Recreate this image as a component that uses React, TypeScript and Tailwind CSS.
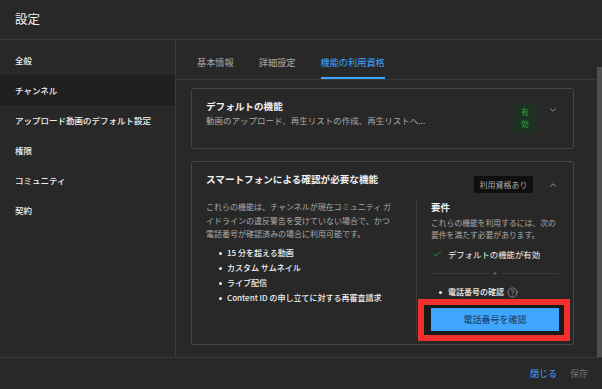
import { Check, ChevronDown, ChevronUp, CircleHelp } from 'lucide-react'

const sideItems = [
  '全般',
  'チャンネル',
  'アップロード動画のデフォルト設定',
  '権限',
  'コミュニティ',
  '契約',
]

const features = [
  '15 分を超える動画',
  'カスタム サムネイル',
  'ライブ配信',
  'Content ID の申し立てに対する再審査請求',
]

export default function App() {
  return (
    <div
      className="flex h-[389px] w-[602px] flex-col overflow-hidden bg-[#282828] text-[#f1f1f1]"
      style={{ fontFamily: '"Noto Sans CJK JP", "Noto Sans", sans-serif' }}
    >
      {/* Header */}
      <header className="flex h-[40px] shrink-0 items-center border-b border-[#3a3a3a] pl-[15px] text-[12.5px]">
        設定
      </header>

      <div className="flex min-h-0 flex-1">
        {/* Sidebar */}
        <nav className="w-[176px] shrink-0 border-r border-[#3a3a3a] pt-[5px]">
          {sideItems.map((item, i) => (
            <div
              key={item}
              className={`flex h-[30px] items-center pl-[15px] text-[8.5px] font-medium ${
                i === 1 ? 'bg-[#1f1f1f]' : ''
              }`}
            >
              {item}
            </div>
          ))}
        </nav>

        {/* Main */}
        <main className="relative flex min-w-0 flex-1 flex-col">
          <div className="flex h-[40px] shrink-0 gap-[25px] border-b border-[#3a3a3a] pl-[21px] text-[9.2px]">
            <div className="flex h-full items-center pt-[7px] text-[#aaaaaa]">基本情報</div>
            <div className="flex h-full items-center pt-[7px] text-[#aaaaaa]">詳細設定</div>
            <div className="flex h-full items-center border-b-2 border-[#3ea6ff] pt-[9px] text-[#3ea6ff]">
              機能の利用資格
            </div>
          </div>

          <div className="flex flex-col gap-[12px] pl-[15px] pr-[28px] pt-[8px]">
            {/* Default features */}
            <section className="flex h-[61px] items-start rounded-[3px] border border-[#474747] pl-[14px] pr-[12px] pt-[10px]">
              <div className="flex-1">
                <div className="text-[9.6px] font-bold leading-[14px]">デフォルトの機能</div>
                <div className="text-[8.5px] leading-[14px] text-[#aaaaaa]">
                  動画のアップロード、再生リストの作成、再生リストへ...
                </div>
              </div>
              <div className="mt-[4px] flex h-[30px] w-[24px] flex-col items-center justify-center bg-[#1d3222] text-[7.5px] leading-[12px] text-[#2ba640]">
                <span>有</span>
                <span>効</span>
              </div>
              <div className="ml-[8px] mt-[6px] flex w-[16px] justify-center text-[#aaaaaa]">
                <ChevronDown size={10} strokeWidth={2} />
              </div>
            </section>

            {/* Smartphone verification */}
            <section className="flex h-[184px] flex-col rounded-[3px] border border-[#474747] pl-[14px] pt-[10px]">
              <div className="flex items-start pr-[12px]">
                <div className="flex-1 text-[9.6px] font-bold leading-[14px]">
                  スマートフォンによる確認が必要な機能
                </div>
                <div className="mt-[4px] flex h-[17px] w-[59px] items-center justify-center bg-[#0f0f0f] text-[8px] text-[#aaaaaa]">
                  利用資格あり
                </div>
                <div className="ml-[12px] mt-[4px] flex h-[17px] w-[16px] items-center justify-center text-[#aaaaaa]">
                  <ChevronUp size={10} strokeWidth={2} />
                </div>
              </div>

              <div className="mt-[7px] flex flex-1 pb-[7px]">
                <div className="w-[200px] shrink-0">
                  <p className="whitespace-nowrap text-[8px] leading-[13.5px] text-[#aaaaaa]">
                    これらの機能は、チャンネルが現在コミュニティ ガ
                    <br />
                    イドラインの違反警告を受けていない場合で、かつ
                    <br />
                    電話番号が確認済みの場合に利用可能です。
                  </p>
                  <ul className="mt-[5px] pl-[13px]">
                    {features.map((f) => (
                      <li key={f} className="flex h-[15px] items-center text-[8px] font-medium">
                        <span className="mr-[5px] h-[3px] w-[3px] rounded-full bg-[#f1f1f1]" />
                        {f}
                      </li>
                    ))}
                  </ul>
                </div>

                <div className="ml-[10px] w-px bg-[#3a3a3a]" />

                <div className="ml-[14px] w-[128px] shrink-0">
                  <div className="text-[9.5px] font-bold leading-[14px]">要件</div>
                  <p className="mt-[3px] text-[7.8px] leading-[11.5px] text-[#aaaaaa]">
                    これらの機能を利用するには、次の要件を満たす必要があります。
                  </p>
                  <div className="mt-[7px] flex h-[14px] items-center text-[8.4px]">
                    <Check size={10} strokeWidth={2.2} className="ml-[1px] mr-[6px] text-[#2ba640]" />
                    デフォルトの機能が有効
                  </div>
                  <div className="mt-[8px] flex items-center gap-[4px]">
                    <div className="h-px flex-1 bg-[#3a3a3a]" />
                    <span className="text-[7px] leading-[8px] text-[#888888]">+</span>
                    <div className="h-px flex-1 bg-[#3a3a3a]" />
                  </div>
                  <div className="mt-[8px] flex h-[14px] items-center text-[8px] font-medium">
                    <span className="ml-[8px] mr-[6px] h-[3px] w-[3px] rounded-full bg-[#f1f1f1]" />
                    電話番号の確認
                    <CircleHelp size={11} strokeWidth={1.5} className="ml-[3px] text-[#aaaaaa]" />
                  </div>
                  <div className="relative mt-[9px]">
                    <div className="absolute -bottom-[10px] -left-[13px] -right-[11px] -top-[9px] border-[6px] border-[#f3302b] bg-[#1b1b1b]" />
                    <button className="relative flex h-[23px] w-full items-center justify-center bg-[#3ea6ff] text-[9px] text-[#1d3550]">
                      電話番号を確認
                    </button>
                  </div>
                </div>
              </div>
            </section>
          </div>

          {/* scrollbar thumb */}
          <div className="absolute bottom-0 right-0 top-[27px] w-[5px] bg-[#4f4f4f]" />
        </main>
      </div>

      {/* Footer */}
      <footer className="flex h-[32px] shrink-0 items-center justify-end gap-[13px] border-t border-[#3a3a3a] pr-[14px] text-[9px]">
        <span className="text-[#3ea6ff]">閉じる</span>
        <span className="text-[#717171]">保存</span>
      </footer>
    </div>
  )
}
